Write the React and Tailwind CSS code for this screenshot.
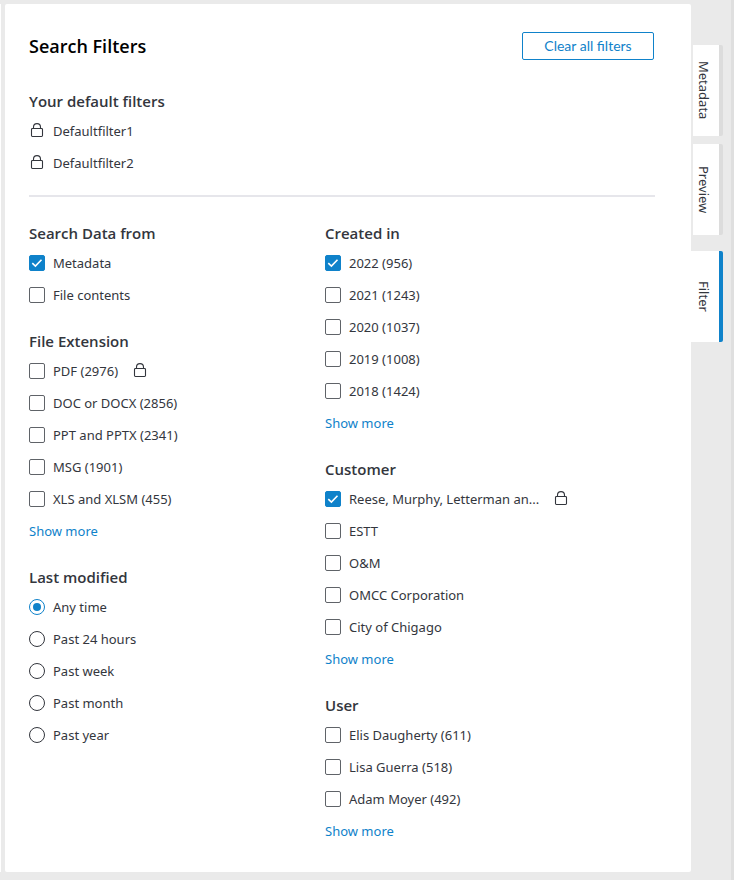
import React, { useId } from "react";

const defaultFilters = ["Defaultfilter1", "Defaultfilter2"];

const leftGroups = [
  {
    title: "Search Data from",
    type: "checkbox",
    options: [{ label: "Metadata", checked: true }, { label: "File contents" }],
  },
  {
    title: "File Extension",
    type: "checkbox",
    more: true,
    options: [
      { label: "PDF (2976)", locked: true },
      { label: "DOC or DOCX (2856)" },
      { label: "PPT and PPTX (2341)" },
      { label: "MSG (1901)" },
      { label: "XLS and XLSM (455)" },
    ],
  },
  {
    title: "Last modified",
    type: "radio",
    options: [
      { label: "Any time", checked: true },
      { label: "Past 24 hours" },
      { label: "Past week" },
      { label: "Past month" },
      { label: "Past year" },
    ],
  },
];

const rightGroups = [
  {
    title: "Created in",
    type: "checkbox",
    more: true,
    options: [
      { label: "2022 (956)", checked: true },
      { label: "2021 (1243)" },
      { label: "2020 (1037)" },
      { label: "2019 (1008)" },
      { label: "2018 (1424)" },
    ],
  },
  {
    title: "Customer",
    type: "checkbox",
    more: true,
    options: [
      { label: "Reese, Murphy, Letterman an...", checked: true, locked: true },
      { label: "ESTT" },
      { label: "O&M" },
      { label: "OMCC Corporation" },
      { label: "City of Chigago" },
    ],
  },
  {
    title: "User",
    type: "checkbox",
    more: true,
    options: [
      { label: "Elis Daugherty (611)" },
      { label: "Lisa Guerra (518)" },
      { label: "Adam Moyer (492)" },
    ],
  },
];

function LockIcon() {
  return (
    <svg
      className="size-4 shrink-0"
      viewBox="0 0 16 16"
      fill="none"
      stroke="#33363d"
      strokeWidth="1.1"
      aria-hidden="true"
    >
      <rect x="2.5" y="5.5" width="11" height="8" rx="0.9" />
      <path d="M4.5 5.5V4.2C4.5 2 5.8.6 8 .6s3.5 1.4 3.5 3.6v1.3" />
    </svg>
  );
}

function Checkbox({ id, checked }) {
  return (
    <span className="grid size-4 shrink-0">
      <input
        id={id}
        type="checkbox"
        defaultChecked={checked}
        className="peer col-start-1 row-start-1 size-4 appearance-none rounded-xs border border-[#5f6368] bg-white checked:border-[#0f82ca] checked:bg-[#0f82ca]"
      />
      <svg
        className="pointer-events-none invisible col-start-1 row-start-1 size-4 peer-checked:visible"
        viewBox="0 0 16 16"
        fill="none"
        stroke="white"
        strokeWidth="1.6"
        aria-hidden="true"
      >
        <path d="M3.3 8.1l3.1 3 6.1-6.3" />
      </svg>
    </span>
  );
}

function Radio({ id, name, checked }) {
  return (
    <span className="grid size-4 shrink-0 place-items-center">
      <input
        id={id}
        name={name}
        type="radio"
        defaultChecked={checked}
        className="peer col-start-1 row-start-1 size-4 appearance-none rounded-full border border-[#33363d] bg-white checked:border-[#0f82ca]"
      />
      <span className="pointer-events-none invisible col-start-1 row-start-1 size-2 rounded-full bg-[#0f82ca] peer-checked:visible" />
    </span>
  );
}

function FilterGroup({ group }) {
  const base = useId();
  return (
    <fieldset>
      <legend className="h-7 font-['Open_Sans',sans-serif] text-[15px] leading-7 font-semibold">
        {group.title}
      </legend>
      {group.options.map((option, i) => {
        const id = `${base}-${i}`;
        return (
          <div key={option.label} className="flex h-8 items-center gap-2">
            {group.type === "radio" ? (
              <Radio id={id} name={base} checked={option.checked} />
            ) : (
              <Checkbox id={id} checked={option.checked} />
            )}
            <label htmlFor={id} className="whitespace-nowrap">
              {option.label}
            </label>
            {option.locked && (
              <span className="pl-1.5">
                <LockIcon />
              </span>
            )}
          </div>
        );
      })}
      {group.more && (
        <div className="flex h-8 items-center">
          <a href="#more" className="text-[#0f82ca]">
            Show more
          </a>
        </div>
      )}
    </fieldset>
  );
}

function Tab({ label, active }) {
  return (
    <button
      type="button"
      role="tab"
      aria-selected={Boolean(active)}
      className={
        active
          ? "mt-2 flex h-[91px] w-8 items-center justify-center rounded-r-xs border-r-4 border-[#0f82ca] bg-white pr-0.5"
          : "ml-0.5 flex h-[91px] w-[30px] items-center justify-center rounded-r-xs border-r-4 border-[#dcdcdc] bg-white pr-1"
      }
    >
      <span className="[writing-mode:vertical-rl]">{label}</span>
    </button>
  );
}

export default function App() {
  return (
    <div className="flex min-h-screen bg-[#eaeaea] font-['Noto_Sans','Open_Sans',sans-serif] text-[13px] leading-5 text-[#33363d]">
      <div className="mt-1 mr-1 mb-2 w-px shrink-0 bg-white" />
      <main className="mt-1 mb-2 min-w-0 flex-1 rounded-xs bg-white pt-7 pr-9 pb-6 pl-6">
        <header className="flex h-7 items-center justify-between pr-px">
          <h1 className="font-['Open_Sans',sans-serif] text-lg leading-6 font-semibold text-black">
            Search Filters
          </h1>
          <button
            type="button"
            className="h-7 w-[132px] rounded-xs border border-[#0f82ca] font-[Lato,sans-serif] text-sm text-[#0f82ca]"
          >
            Clear all filters
          </button>
        </header>

        <section className="mt-[27px] border-b-2 border-[#e6e6eb] pb-4">
          <h2 className="h-7 font-['Open_Sans',sans-serif] text-[15px] leading-7 font-semibold">
            Your default filters
          </h2>
          <ul>
            {defaultFilters.map((name) => (
              <li key={name} className="flex h-8 items-center gap-2">
                <LockIcon />
                {name}
              </li>
            ))}
          </ul>
        </section>

        <div className="mt-[22px] grid grid-cols-[296fr_330fr]">
          <div className="flex flex-col gap-4">
            {leftGroups.map((group) => (
              <FilterGroup key={group.title} group={group} />
            ))}
          </div>
          <div className="flex flex-col gap-4">
            {rightGroups.map((group) => (
              <FilterGroup key={group.title} group={group} />
            ))}
          </div>
        </div>
      </main>

      <div role="tablist" aria-orientation="vertical" className="flex w-10 shrink-0 flex-col gap-2 pt-[45px]">
        <Tab label="Metadata" />
        <Tab label="Preview" />
        <Tab label="Filter" active />
      </div>
      <div className="w-[3px] shrink-0 bg-[#dfdfdf]" />
    </div>
  );
}
